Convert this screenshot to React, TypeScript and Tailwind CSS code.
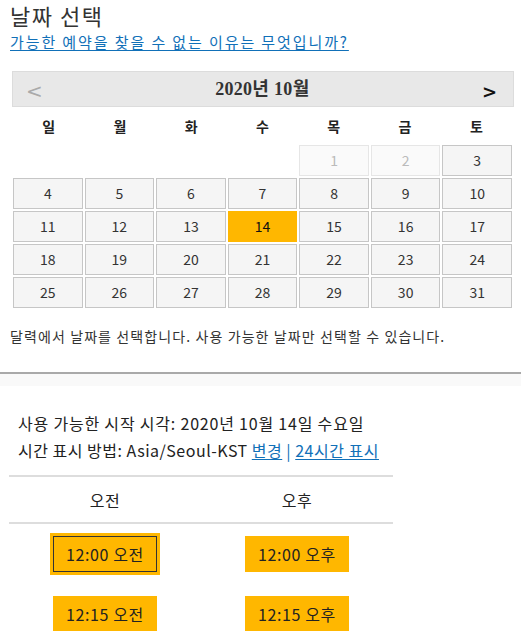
import React from 'react';

const dayNames = ['일', '월', '화', '수', '목', '금', '토'];

type Cell = { day: number | null; disabled?: boolean };

const cells: Cell[] = [
  { day: null }, { day: null }, { day: null }, { day: null },
  { day: 1, disabled: true }, { day: 2, disabled: true },
  ...Array.from({ length: 29 }, (_, i) => ({ day: i + 3 })),
];

const times = [
  { am: '12:00 오전', pm: '12:00 오후' },
  { am: '12:15 오전', pm: '12:15 오후' },
];

const TimeButton: React.FC<{ label: string; selected?: boolean }> = ({ label, selected }) => {
  if (selected) {
    return (
      <div className="p-[3px] bg-[#ffb700]">
        <div className="w-[104px] h-[36px] border border-[#333] flex items-center justify-center text-[16px] tracking-[0.6px] text-[#222]">
          {label}
        </div>
      </div>
    );
  }
  return (
    <div className="w-[104px] h-[36px] bg-[#ffb700] flex items-center justify-center text-[16px] tracking-[0.6px] text-[#222]">
      {label}
    </div>
  );
};

export default function App() {
  return (
    <div
      className="w-[521px] h-[631px] overflow-hidden bg-white text-[#333]"
      style={{ fontFamily: '"Noto Sans CJK KR", "Noto Sans", sans-serif' }}
    >
      {/* Date section */}
      <div className="px-[10px]">
        <h1 className="text-[22px] leading-[31px] tracking-[1.5px]">날짜 선택</h1>
        <a className="block text-[15px] leading-[22px] tracking-[1.9px] text-[#1170b8] underline underline-offset-2">
          가능한 예약을 찾을 수 없는 이유는 무엇입니까?
        </a>
      </div>

      {/* Calendar */}
      <div className="ml-[12px] w-[502px] mt-[18px]">
        <div className="h-[36px] bg-[#e8e8e8] border border-[#dcdcdc] flex items-center justify-between pl-[13px] pr-[16px]">
          <span className="text-[20px] text-[#aaa] mt-[4px]" style={{ fontFamily: '"DejaVu Sans", sans-serif' }}>&lt;</span>
          <span className="text-[18px] font-bold text-[#333] tracking-[0.3px]" style={{ fontFamily: '"Liberation Serif", "Noto Sans CJK KR", serif' }}>
            2020년 10월
          </span>
          <span className="text-[18px] font-bold text-[#111] mt-[4px]" style={{ fontFamily: '"DejaVu Sans", sans-serif' }}>&gt;</span>
        </div>
        <div className="grid grid-cols-7 w-[499px] ml-[1px] h-[38px] items-center">
          {dayNames.map((d) => (
            <div key={d} className="text-center text-[14px] font-bold text-[#222]">{d}</div>
          ))}
        </div>
        <div className="grid grid-cols-7 gap-x-[2px] gap-y-[2px] w-[499px] ml-[1px]">
          {cells.map((c, i) => {
            if (c.day === null) return <div key={i} className="h-[31px]" />;
            if (c.disabled) {
              return (
                <div key={i} className="h-[31px] border border-[#e6e6e6] bg-[#fafafa] text-[#bbb] flex items-center justify-center text-[14px]">
                  {c.day}
                </div>
              );
            }
            if (c.day === 14) {
              return (
                <div key={i} className="h-[31px] bg-[#ffb700] text-[#111] flex items-center justify-center text-[14px]">
                  {c.day}
                </div>
              );
            }
            return (
              <div key={i} className="h-[31px] border border-[#c6c6c6] bg-[#f5f5f5] text-[#333] flex items-center justify-center text-[14px]">
                {c.day}
              </div>
            );
          })}
        </div>
      </div>

      <p className="px-[10px] mt-[18px] text-[14px] leading-[20px] tracking-[1.1px] text-[#333]">
        달력에서 날짜를 선택합니다. 사용 가능한 날짜만 선택할 수 있습니다.
      </p>

      <div className="mt-[26px] border-t-2 border-[#a9a9a9] h-[14px] bg-[#f9f9f9]" />

      {/* Time section */}
      <div className="px-[18px] mt-[24px] text-[16px] leading-[27px] tracking-[0.8px] text-[#222]">
        <div>사용 가능한 시작 시각: 2020년 10월 14일 수요일</div>
        <div className="tracking-[0.5px]">
          시간 표시 방법: Asia/Seoul-KST{' '}
          <a className="text-[#1170b8] underline underline-offset-2">변경</a>
          <span className="text-[#1170b8]"> | </span>
          <a className="text-[#1170b8] underline underline-offset-2">24시간 표시</a>
        </div>
      </div>

      <div className="ml-[9px] w-[384px] mt-[11px]">
        <div className="border-t-2 border-b-2 border-[#dddddd] grid grid-cols-2 h-[49px] items-center text-[16px] tracking-[0.6px] text-[#222]">
          <div className="text-center">오전</div>
          <div className="text-center">오후</div>
        </div>
        <div className="flex flex-col">
          {times.map((t, i) => (
            <div key={i} className="grid grid-cols-2 h-[60px] items-center">
              <div className="flex justify-center"><TimeButton label={t.am} selected={i === 0} /></div>
              <div className="flex justify-center"><TimeButton label={t.pm} /></div>
            </div>
          ))}
        </div>
      </div>
    </div>
  );
}
